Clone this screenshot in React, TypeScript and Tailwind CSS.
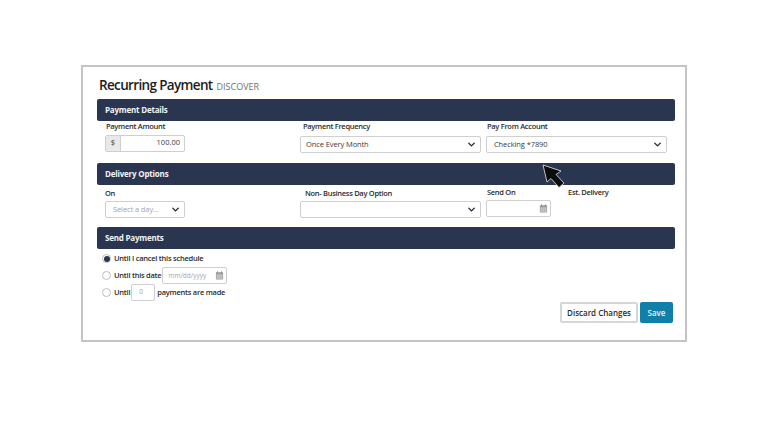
import { ChevronDown } from 'lucide-react';

function SectionBar({ title }: { title: string }) {
  return (
    <div className="flex h-[22px] w-[578px] items-center rounded-[2px] bg-[#2a3550] pl-2 text-[8px] font-bold tracking-[-0.2px] text-[#f2f3f5]">
      {title}
    </div>
  );
}

function Label({ text }: { text: string }) {
  return <div className="text-[7.5px] leading-[11px] font-semibold tracking-[-0.3px] text-[#2b2b2b]">{text}</div>;
}

function CalendarIcon() {
  return (
    <svg viewBox="0 0 10 10" className="h-[9px] w-[9px]">
      <rect x="1" y="1.5" width="8" height="8" rx="0.5" fill="#9a9a9a" />
      <rect x="2.2" y="0.4" width="1" height="2" fill="#8a8a8a" />
      <rect x="6.8" y="0.4" width="1" height="2" fill="#8a8a8a" />
      <rect x="1.8" y="3.8" width="6.4" height="4.8" fill="#d4d4d4" />
      <path d="M1.8 5.4h6.4M1.8 7h6.4M3.9 3.8v4.8M6.1 3.8v4.8" stroke="#9a9a9a" strokeWidth="0.4" />
    </svg>
  );
}

function SelectBox({ text, width, left }: { text: string; width: string; left: string }) {
  return (
    <div className={`flex h-[17px] items-center justify-between rounded-[2px] border border-[#cfcfcf] bg-white pr-[3px] text-[7.5px] tracking-[-0.1px] ${width} ${left}`}>
      <span>{text}</span>
      <ChevronDown className="h-[11px] w-[11px] text-[#1f2433]" strokeWidth={3} />
    </div>
  );
}

export default function App() {
  return (
    <div className="h-[432px] w-[768px] bg-white pt-[65px] pl-[81px] font-['Open_Sans',sans-serif]">
      <div className="relative h-[277px] w-[606px] border-2 border-[#c4c4c4] pl-[14px]">
        {/* Title */}
        <div className="flex h-[32px] items-end gap-[4px] pb-[4px] pl-[2px]">
          <span className="text-[13.5px] leading-[20px] font-semibold tracking-[-0.65px] text-[#1c1c1c]">Recurring Payment</span>
          <span className="text-[9px] leading-[17px] text-[#6f6f6f]">DISCOVER</span>
        </div>

        <SectionBar title="Payment Details" />
        <div className="flex h-[42px]">
          <div className="w-[203px] pl-[8px]">
            <div className="pl-[1px]"><Label text="Payment Amount" /></div>
            <div className="mt-[3px] flex h-[17px] w-[80px] rounded-[2px] border border-[#cfcfcf] text-[7.5px] text-[#3a3a3a]">
              <div className="flex w-[15px] justify-center border-r border-[#cfcfcf] bg-[#e9e9e9] pt-[1px]">$</div>
              <div className="flex-1 pt-[1px] pr-[4px] text-right">100.00</div>
            </div>
          </div>
          <div className="w-[186px]">
            <div className="pl-[3px]"><Label text="Payment Frequency" /></div>
            <div className="mt-[4px]"><SelectBox text="Once Every Month" width="w-[181px]" left="pl-[5px] text-[#3a3a3a]" /></div>
          </div>
          <div>
            <div className="pl-[1px]"><Label text="Pay From Account" /></div>
            <div className="mt-[4px]"><SelectBox text="Checking *7890" width="w-[181px]" left="pl-[7px] text-[#3a3a3a]" /></div>
          </div>
        </div>

        <SectionBar title="Delivery Options" />
        <div className="flex h-[42px] pt-[3px]">
          <div className="w-[203px] pl-[8px]">
            <Label text="On" />
            <div className="mt-[2px]"><SelectBox text="Select a day..." width="w-[80px]" left="pl-[7px] text-[#a3a3a3]" /></div>
          </div>
          <div className="w-[186px]">
            <div className="pl-[5px]"><Label text="Non- Business Day Option" /></div>
            <div className="mt-[2px]"><SelectBox text="" width="w-[181px]" left="pl-[5px]" /></div>
          </div>
          <div className="-mt-[1px] w-[82px]">
            <div className="pl-[1px]"><Label text="Send On" /></div>
            <div className="mt-[2px] flex h-[17px] w-[65px] items-center justify-end rounded-[2px] border border-[#cfcfcf] pr-[2px]">
              <CalendarIcon />
            </div>
          </div>
          <div className="-mt-[1px]"><Label text="Est. Delivery" /></div>
        </div>

        <SectionBar title="Send Payments" />
        <div className="flex flex-col pt-[1px] pl-[5px] text-[7.5px] font-semibold tracking-[-0.25px] text-[#2b2b2b]">
          <div className="flex h-[17px] items-center gap-[3px]">
            <span className="flex h-[9px] w-[9px] items-center justify-center rounded-full border border-[#bdbdbd]">
              <span className="h-[6px] w-[6px] rounded-full bg-[#2a3550]" />
            </span>
            <span>Until I cancel this schedule</span>
          </div>
          <div className="flex h-[17px] items-center gap-[3px]">
            <span className="h-[9px] w-[9px] rounded-full border border-[#bdbdbd]" />
            <span>Until this date</span>
            <div className="-ml-[2px] flex h-[17px] w-[65px] items-center justify-between rounded-[2px] border border-[#cfcfcf] pr-[2px] pl-[5px] text-[6.5px] font-normal tracking-normal text-[#a3a3a3]">
              <span>mm/dd/yyyy</span>
              <CalendarIcon />
            </div>
          </div>
          <div className="flex h-[17px] items-center gap-[2px]">
            <span className="mr-[1px] h-[9px] w-[9px] rounded-full border border-[#bdbdbd]" />
            <span>Until</span>
            <div className="-ml-[1px] h-[17px] w-[24px] rounded-[2px] border border-[#cfcfcf] pt-[2px] pl-[7px] text-[6.5px] font-normal text-[#a3a3a3]">0</div>
            <span>payments are made</span>
          </div>
        </div>

        {/* Footer buttons */}
        <div className="mt-[1px] flex w-[576px] justify-end gap-[2px]">
          <button className="h-[21px] w-[78px] rounded-[2px] border-2 border-[#d6d6d6] bg-white text-[8px] font-semibold text-[#2b2b2b]">Discard Changes</button>
          <button className="h-[21px] w-[33px] rounded-[2px] bg-[#117fa8] text-[8px] font-semibold text-[#e8f2f6]">Save</button>
        </div>

        {/* Mouse pointer over the page */}
        <svg viewBox="0 0 26 26" className="absolute top-[97px] left-[458px] h-[26px] w-[26px]">
          <path d="M2 1 L6 18 L10 14.5 L18 23.5 L23 19 L15 10.5 L20 7 Z" fill="#0c0c0c" stroke="#e8e8e8" strokeWidth="0.8" strokeLinejoin="round" />
        </svg>
      </div>
    </div>
  );
}
